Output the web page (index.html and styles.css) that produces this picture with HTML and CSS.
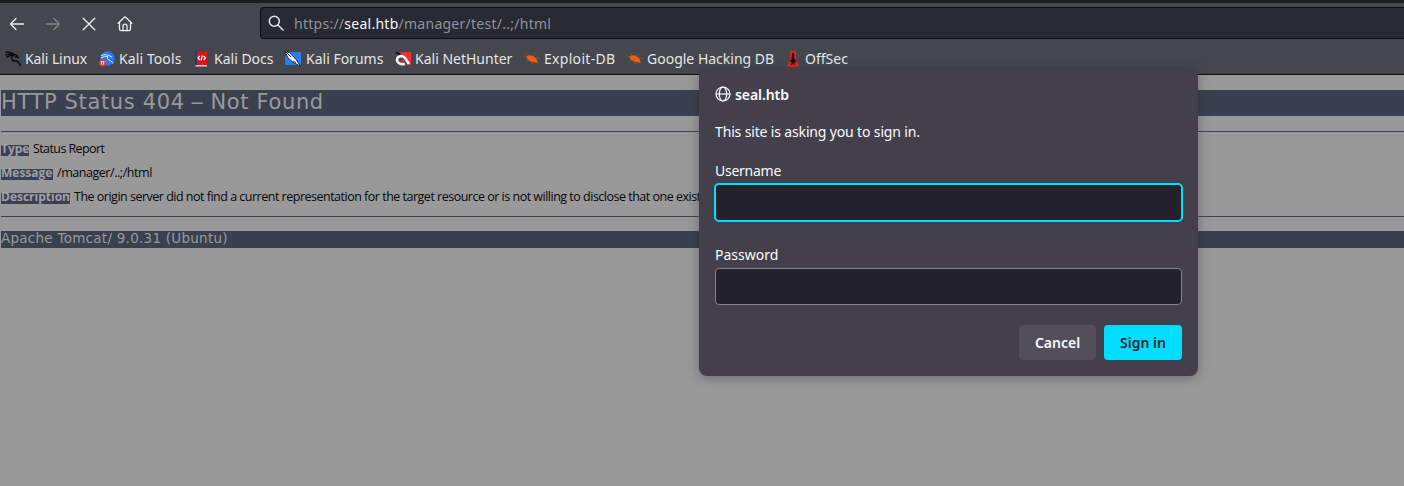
FILE: index.html
```html
<!DOCTYPE html>
<html lang="en">
<head>
<meta charset="utf-8">
<title>HTTP Status 404 – Not Found</title>
<link rel="stylesheet" href="styles.css">
</head>
<body>
<header class="chrome">
  <nav class="toolbar">
    <div class="nav-buttons">
      <svg class="nav-icon" viewBox="0 0 16 16"><path d="M14.500 8H1.500M7 2.500L1.500 8 7 13.500"/></svg>
      <svg class="nav-icon disabled" viewBox="0 0 16 16"><path d="M1.500 8h13M9 2.500L14.500 8 9 13.500"/></svg>
      <svg class="nav-icon" viewBox="0 0 16 16"><path d="M2.200 2.200l11.600 11.600M13.800 2.200L2.200 13.800"/></svg>
      <svg class="nav-icon" viewBox="0 0 16 16"><path d="M1.200 7.200L7.300 1.200Q8 .6 8.700 1.200L14.800 7.200M2.500 6.500V13Q2.500 14.700 4.200 14.700H11.800Q13.500 14.700 13.500 13V6.500M6 14.500V10.200Q6 8.200 8 8.200T10 10.200V14.500"/></svg>
    </div>
    <div class="urlbar">
      <svg class="search" viewBox="0 0 16 16"><circle cx="6.300" cy="6.300" r="5"/><path d="M10 10l5 5"/></svg>
      <span class="url">https://<b>seal.htb</b>/manager/test/..;/html</span>
    </div>
  </nav>
  <div class="bookmarks">
    <a class="bm linux"><svg viewBox="0 0 16 16"><path d="M.3 1.300Q5 .5 9.500 3.500M.5 4.300Q5 2.200 9.500 3.500M1.500 6.300Q5 4 9 4.500M9 3.500l2.500.7 1.500 2-3-.5M9 4.500Q5.500 6.500 7 8.500T11.500 10Q14.500 11 15.300 15" fill="none" stroke="#08090b" stroke-width="1.400"/></svg><span>Kali Linux</span></a>
    <a class="bm tools"><svg viewBox="0 0 16 16"><circle cx="8.500" cy="7.500" r="7.200" fill="#2877f5"/><path d="M2 4.500Q6 2.500 10 4.500l3 1.500M2 7Q6 4.500 9 5.500 7 8 10 9t4 3.500" fill="none" stroke="#d8e8ff" stroke-width="1"/><circle cx="3.500" cy="12" r="3.600" fill="#ef353b"/><path d="M1.800 10.700h3.700M2.700 10.700v3M4.600 10.700v3" stroke="#fff" fill="none" stroke-width=".9"/></svg><span>Kali Tools</span></a>
    <a class="bm docs"><svg viewBox="0 0 16 16"><path d="M2 .5h11V14H2z" fill="#df1218"/><path d="M1 .5h1.800V14H1z" fill="#173f70"/><path d="M1.500 14H13v1.500H1.500z" fill="#d9c7c7"/><path d="M5.700 5L4 7l1.700 2M9.700 5l1.700 2-1.700 2M8.300 4.500L7 9.500" fill="none" stroke="#fff" stroke-width="1.200"/></svg><span>Kali Docs</span></a>
    <a class="bm forums"><svg viewBox="0 0 16 16"><path d="M2 1h14v13H0V7z" fill="#2580f7"/><path d="M0 .5l4.500 1L11 8.500l4.500 6.500-6.500-3L3 7z" fill="#f1f1ed" stroke="#202329" stroke-width=".9"/><path d="M1 1l5 5M8 10l3 2" stroke="#333" fill="none"/></svg><span>Kali Forums</span></a>
    <a class="bm nethunter"><svg viewBox="0 0 16 16"><path d="M4 1h12v13h-3L9 5z" fill="#f22b35"/><path d="M1 1.500l4 2M0 7l3 3" stroke="#15181b" stroke-width="2"/><path d="M14 13L10 7C7 3 .5 6 2.500 10.500 4 13.500 7 13.500 10 13" fill="none" stroke="#f3f3f3" stroke-width="2.700"/><path d="M5 9l3-1 2.500 3H6z" fill="#df202a"/></svg><span>Kali NetHunter</span></a>
    <a class="bm exploit"><svg viewBox="0 0 16 16"><path d="M2.500 5l4-1 3.500 1.500 3 3 .5 3.500-3-.5-4.500-1.500-3-2z" fill="#ee620d"/><path d="M0 4.500l4 2M3 1.500l3 3.500M9 5l2.500-1.500M11 7l4.500 0M12 10.500l3 2M2 10.500l3-1.500M7 10.500l1.500 2.500" stroke="#a9541f" stroke-width=".7"/></svg><span>Exploit-DB</span></a>
    <a class="bm ghdb"><svg viewBox="0 0 16 16"><path d="M2.500 5l4-1 3.500 1.500 3 3 .5 3.500-3-.5-4.500-1.500-3-2z" fill="#ee620d"/><path d="M0 4.500l4 2M3 1.500l3 3.500M9 5l2.500-1.500M11 7l4.500 0M12 10.500l3 2M2 10.500l3-1.500M7 10.500l1.500 2.500" stroke="#a9541f" stroke-width=".7"/></svg><span>Google Hacking DB</span></a>
    <a class="bm offsec"><svg viewBox="0 0 16 16"><path d="M5 0h6v8.500L14.500 16h-13L5 8.500z" fill="#e52127"/><path d="M7 2h2l.5 6 2 2.500-2 .5.500 3H9l-1-2-1 2H6l.5-3-2-.5L6.500 8z" fill="#260d10"/></svg><span>OffSec</span></a>
  </div>
</header>
<main class="page">
  <h1><span>HTTP Status 404 <i class="dash">–</i> Not Found</span></h1>
  <hr>
  <p><b class="k-type">Type</b><span>Status Report</span></p>
  <p><b class="k-msg">Message</b><span class="path">/manager/..;/html</span></p>
  <p><b class="k-desc">Description</b><span class="description">The origin server did not find a current representation for the target resource or is not willing to disclose that one exists.</span></p>
  <hr class="second">
  <h3><span>Apache Tomcat/ 9.0.31 (Ubuntu)</span></h3>
</main>
<section class="dialog" role="dialog">
  <div class="site"><svg viewBox="0 0 16 16"><circle cx="8" cy="8" r="7"/><ellipse cx="8" cy="8" rx="3.700" ry="7"/><path d="M1 8h14"/></svg><b>seal.htb</b></div>
  <div class="prompt"><span>This site is asking you to sign in.</span></div>
  <label for="user">Username</label>
  <input id="user" class="focused" type="text">
  <label class="pw-label" for="pw">Password</label>
  <input id="pw" type="password">
  <div class="actions"><button class="cancel">Cancel</button><button class="primary">Sign in</button></div>
</section>
</body>
</html>
```
FILE: styles.css
```css
* { box-sizing: border-box; }
body { margin: 0; width: 1404px; height: 486px; overflow: hidden; background: #99999a; font-family: "Noto Sans", sans-serif; font-size: 14px; }
.chrome { height: 75px; background: #44474d; border-top: 3px solid #1b1d23; border-bottom: 1px solid #0d0e12; color: #e6e6e6; }
.toolbar { display: flex; height: 40px; padding-top: 4px; }
.nav-buttons { display: flex; align-items: center; gap: 20px; width: 260px; height: 34px; padding-left: 9px; }
.nav-icon { width: 16px; height: 16px; fill: none; stroke: #f0f0f0; stroke-width: 1.3; stroke-linecap: round; stroke-linejoin: round; }
.disabled { stroke: #838589; }
.urlbar { flex: 1; height: 32px; display: flex; align-items: center; gap: 10px; padding-left: 7px; background: #272933; border: 1px solid #0e1016; border-right: 0; border-radius: 4px 0 0 4px; }
.search { width: 16px; height: 16px; fill: none; stroke: #e8e8ea; stroke-width: 1.5; stroke-linecap: round; }
.url { color: #929399; letter-spacing: .26px; }
.url b { color: #f8f8fa; font-weight: 400; }
.bookmarks { display: flex; align-items: center; height: 31px; padding-left: 5px; }
.bm { display: flex; align-items: center; gap: 4px; height: 20px; white-space: nowrap; flex: none; }
.bm svg { width: 16px; height: 16px; flex: none; }
.linux { width: 94px; letter-spacing: -.1px; }
.tools { width: 95px; letter-spacing: .1px; }
.docs { width: 92px; }
.forums { width: 109px; margin-left: -1px; gap: 5px; }
.nethunter { width: 129px; margin-left: 1px; }
.exploit { width: 103px; letter-spacing: .3px; }
.ghdb { width: 158px; }

.page { padding-left: 1px; font-family: "Open Sans", sans-serif; color: #080808; }
.page h1, .page h3 { margin: 0; background: #3b4050; color: #999a9c; font-family: "DejaVu Sans", sans-serif; font-weight: 400; white-space: nowrap; }
.page h1 { margin-top: 15px; height: 26px; line-height: 24px; font-size: 21px; letter-spacing: .64px; }
.dash { display: inline-block; font-style: normal; transform: scaleX(1.3); }
.page hr { height: 1px; margin: 15px 0 9px; border: 0; background: #41425a; }
.page p { display: flex; gap: 4px; margin: 0; height: 24px; line-height: 15px; font-size: 12.5px; letter-spacing: -.6px; white-space: nowrap; }
.page p b { height: 11px; margin-top: 4px; line-height: 8px; background: #3b4054; color: #a0a0a5; font-size: 12px; letter-spacing: 0; }
.k-type { width: 28px; }
.k-msg { width: 52px; }
.k-desc { width: 69px; }
.path { letter-spacing: -.45px; }
.description { letter-spacing: -.5px; }
.page .second { margin: 3px 0 14px; }
.page h3 { height: 17px; line-height: 15px; font-size: 13.5px; letter-spacing: .26px; }
.dialog { position: absolute; left: 699px; top: 69px; width: 499px; height: 307px; padding: 16px; display: flex; flex-direction: column; background: #43404c; border-radius: 8px; color: #fbfbfe; box-shadow: 0 2px 12px rgba(25,25,35,.35); }
.site { display: flex; align-items: center; gap: 4px; height: 18px; font-weight: 600; }
.site b { font-weight: 600; letter-spacing: -.08px; }
.site svg { width: 16px; height: 16px; fill: none; stroke: #fbfbfe; stroke-width: 1.2; }
.prompt { margin-top: 19px; height: 20px; line-height: 20px; letter-spacing: -.15px; }
.dialog label { height: 19px; margin-top: 19px; line-height: 19px; letter-spacing: -.25px; }
.dialog input { width: 467px; height: 37px; margin-top: 4px; border: 1px solid #85838b; border-radius: 4px; background: #23212a; outline: none; }
.dialog .focused { width: 469px; height: 39px; margin: 3px 0 0 -1px; border: 2px solid #00ddff; border-radius: 5px; }
.dialog .pw-label { margin-top: 23px; letter-spacing: 0; }
.actions { display: flex; justify-content: flex-end; gap: 8px; margin-top: 20px; }
.actions button { height: 35px; padding: 0; border: 0; border-radius: 4px; font: 600 14px "Noto Sans", sans-serif; }
.cancel { width: 77px; background: #524f5b; color: #fbfbfe; }
.primary { width: 78px; background: #00ddff; color: #2b2a33; }
```
